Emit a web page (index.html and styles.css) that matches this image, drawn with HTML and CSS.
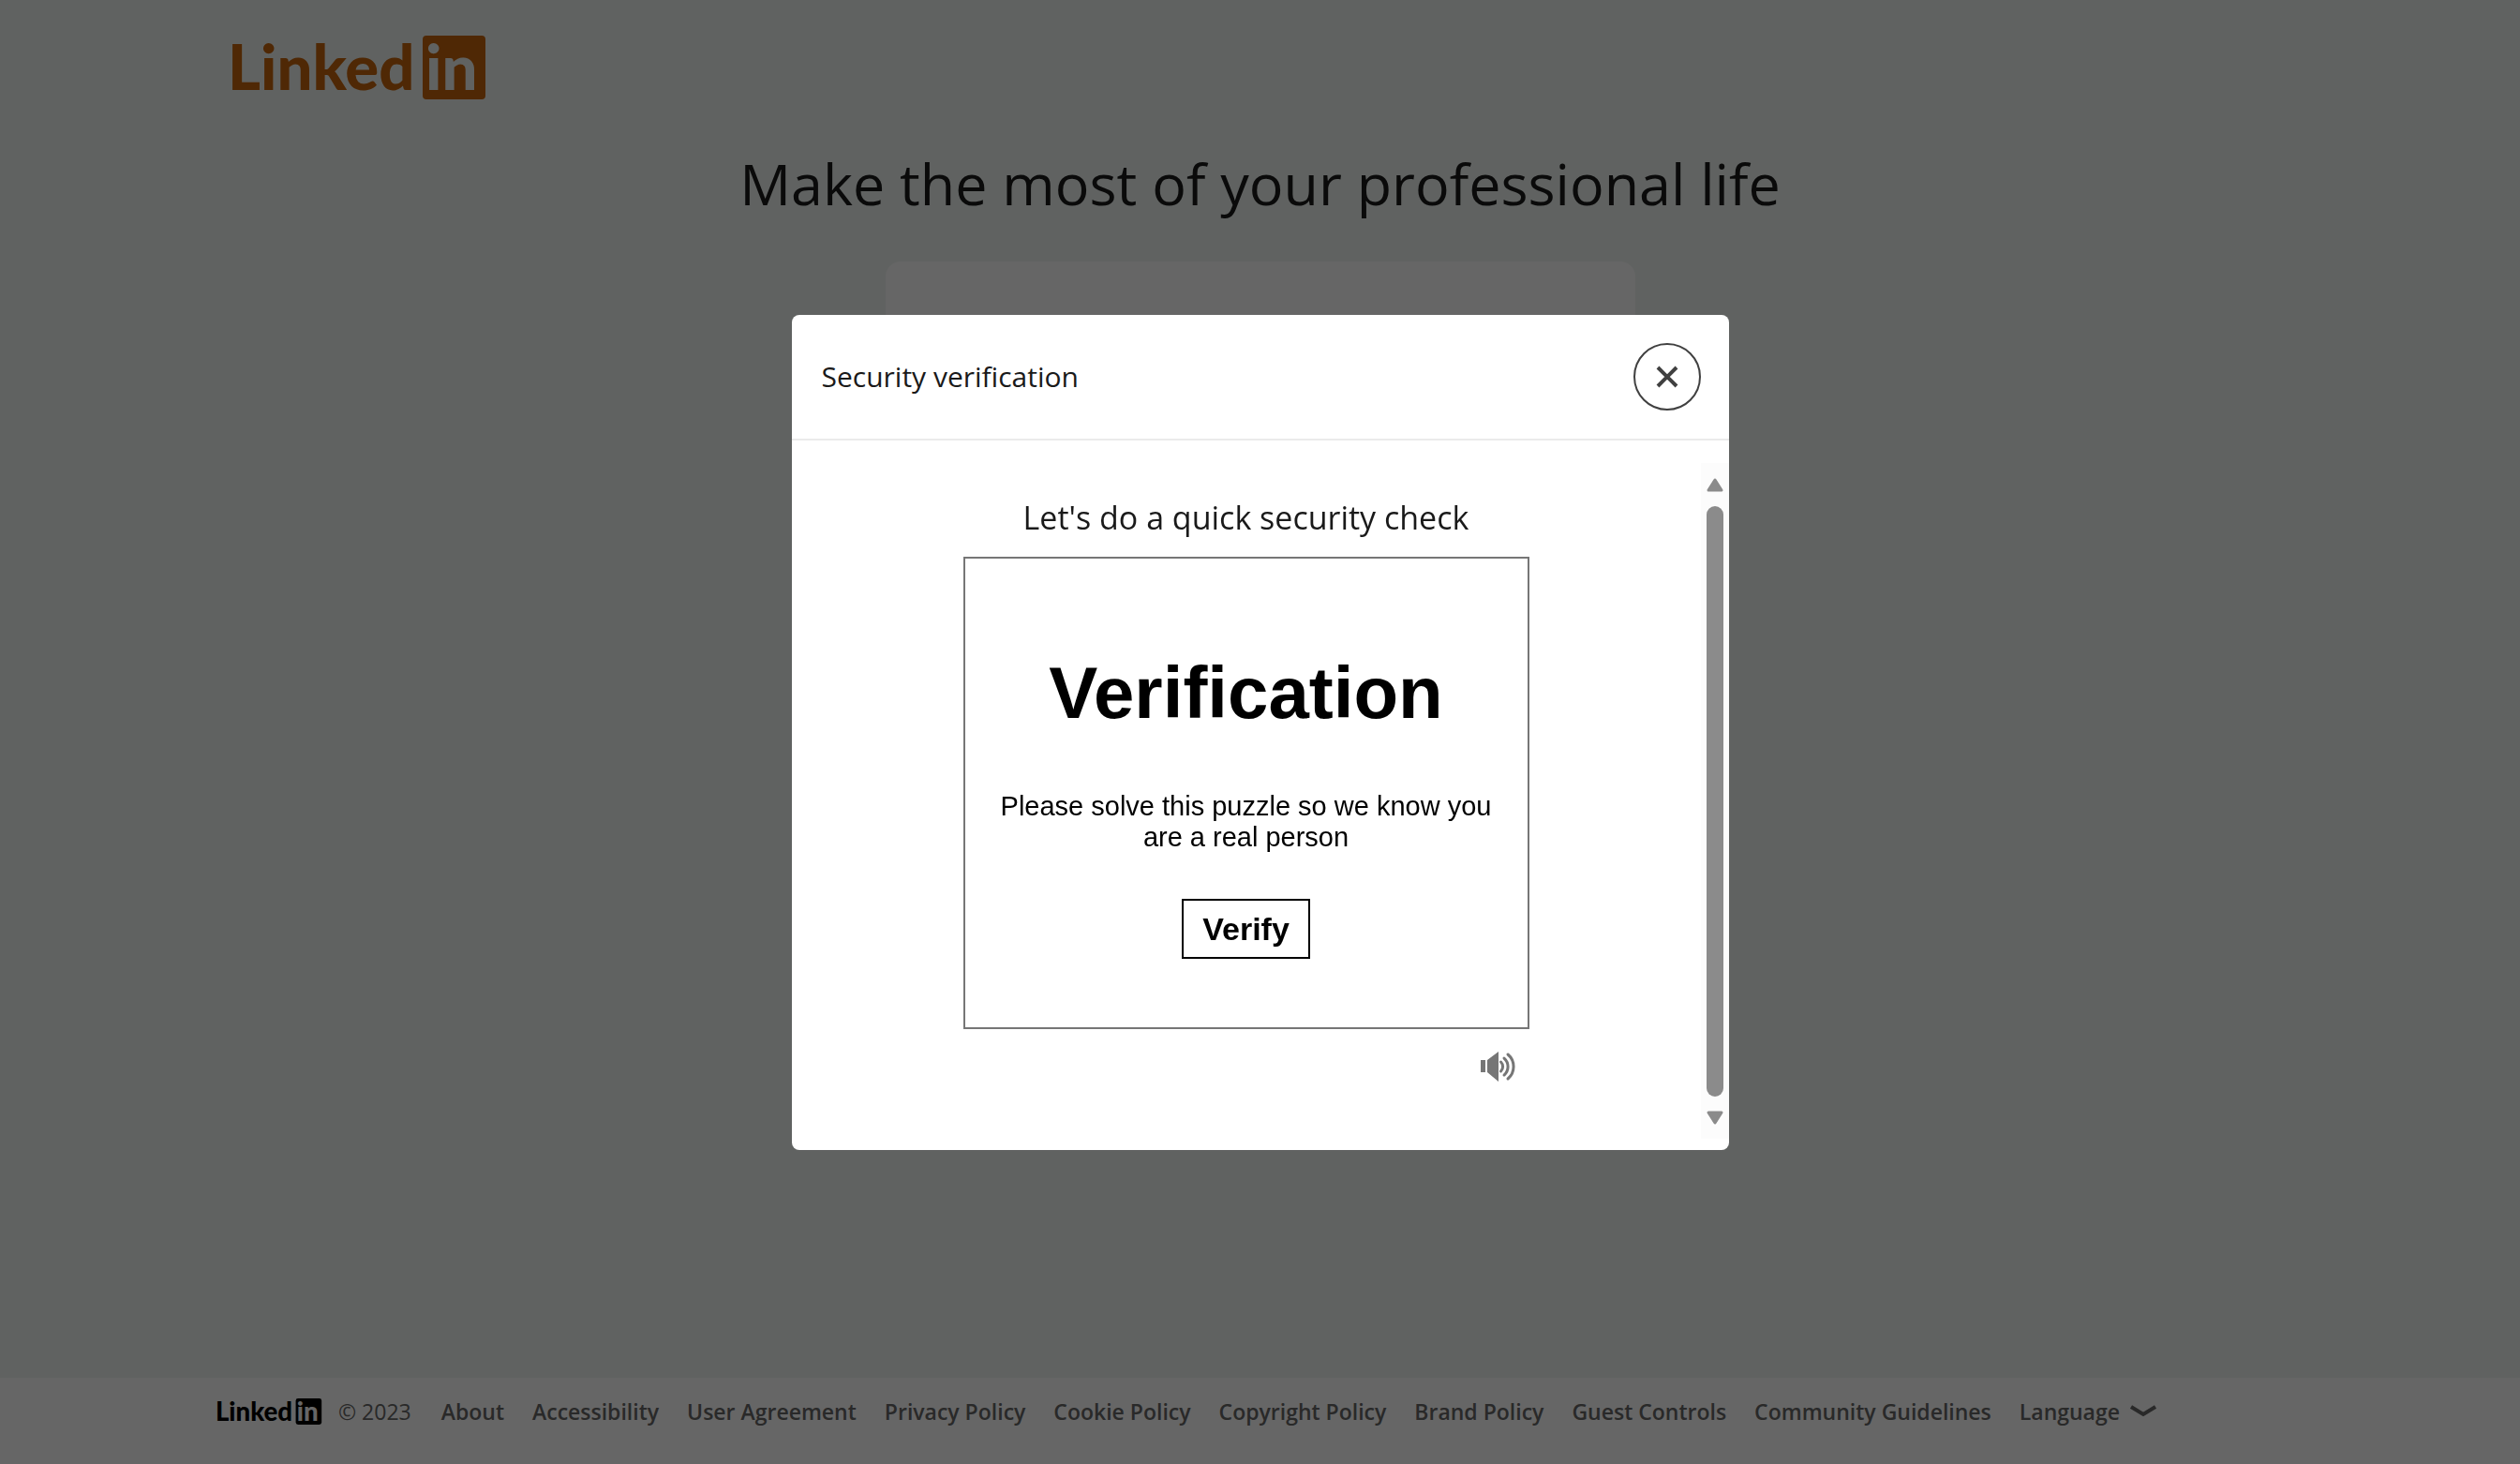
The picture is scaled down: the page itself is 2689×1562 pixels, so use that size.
FILE: index.html
```html
<!DOCTYPE html>
<html lang="en">
<head>
<meta charset="utf-8">
<title>Sign Up | LinkedIn</title>
<link rel="stylesheet" href="styles.css">
</head>
<body>
<div class="page">
  <header class="page-header">
    <a href="#" class="brand" aria-label="LinkedIn">
      <svg class="brand-logo" viewBox="0 0 272 68">
        <text x="-5" y="58" class="wordmark">Linked</text>
        <rect x="203" y="0" width="67" height="68" rx="4"/>
        <text x="206" y="58" class="wordmark wordmark-in">in</text>
      </svg>
    </a>
  </header>
  <main class="join">
    <h1 class="join-title">Make the most of your professional life</h1>
    <div class="join-card"></div>
  </main>
  <footer class="footer">
    <svg class="footer-logo" viewBox="0 0 272 68" role="img" aria-label="LinkedIn">
      <text x="-5" y="58" class="wordmark">Linked</text>
      <rect x="203" y="0" width="67" height="68" rx="6"/>
      <text x="206" y="58" class="wordmark wordmark-in">in</text>
    </svg>
    <span class="copyright">© 2023</span>
    <nav class="footer-links">
      <a href="#">About</a>
      <a href="#">Accessibility</a>
      <a href="#">User Agreement</a>
      <a href="#">Privacy Policy</a>
      <a href="#">Cookie Policy</a>
      <a href="#">Copyright Policy</a>
      <a href="#">Brand Policy</a>
      <a href="#">Guest Controls</a>
      <a href="#">Community Guidelines</a>
      <button type="button" class="language">Language
        <svg class="chevron" viewBox="0 0 28 14"><path d="M1 2L14 10L27 2" fill="none" stroke="currentColor" stroke-width="4"/></svg>
      </button>
    </nav>
  </footer>
</div>

<div class="overlay">
  <section class="modal" role="dialog" aria-labelledby="modal-title">
    <header class="modal-header">
      <h2 class="modal-title" id="modal-title">Security verification</h2>
      <button type="button" class="close" aria-label="Close">
        <svg viewBox="0 0 24 24"><path d="M2 2L22 22M22 2L2 22" stroke="currentColor" stroke-width="4"/></svg>
      </button>
    </header>
    <div class="modal-body">
      <div class="check">
        <h3 class="check-title">Let's do a quick security check</h3>
        <div class="puzzle">
          <h4 class="puzzle-title">Verification</h4>
          <p class="puzzle-text">Please solve this puzzle so we know you are a real person</p>
          <button type="button" class="verify">Verify</button>
        </div>
        <button type="button" class="audio" aria-label="Audio challenge">
          <svg viewBox="0 0 40 34">
            <path d="M1 10h5v13H1zM8 10L20 1v32L8 23z" fill="currentColor"/>
            <path d="M22.500 12a7 7 0 0 1 0 10M26 8a12 12 0 0 1 0 18M30 4a17 17 0 0 1 0 26" fill="none" stroke="currentColor" stroke-width="3" stroke-linecap="round"/>
          </svg>
        </button>
      </div>
      <div class="scrollbar" aria-hidden="true">
        <svg class="arrow" viewBox="0 0 18 15"><path d="M9 2L16 13H2z" fill="currentColor" stroke="currentColor" stroke-width="3" stroke-linejoin="round"/></svg>
        <div class="thumb"></div>
        <svg class="arrow" viewBox="0 0 18 15"><path d="M9 13L16 2H2z" fill="currentColor" stroke="currentColor" stroke-width="3" stroke-linejoin="round"/></svg>
      </div>
    </div>
  </section>
</div>
</body>
</html>
```
FILE: styles.css
```css
* { box-sizing: border-box; }

body {
  margin: 0;
  font-family: "Open Sans", "Noto Sans", sans-serif;
  color: #1a1a1a;
}

h1, h2, h3, h4, p { margin: 0; font-weight: 400; }

button {
  padding: 0;
  border: 0;
  background: none;
  font: inherit;
  color: inherit;
  cursor: pointer;
}

svg { display: block; overflow: visible; }

.page {
  display: flex;
  flex-direction: column;
  min-height: 100vh;
  background: #f0f6f3;
}

.page-header { display: flex; padding: 38px 248px 0; }

.brand { color: #c6640d; }
.brand-logo { width: 272px; height: 68px; fill: currentColor; }

.wordmark { font: 900 67px Lato, sans-serif; }
.wordmark-in { fill: #f0f6f3; }

.join {
  display: flex;
  flex: 1;
  flex-direction: column;
  align-items: center;
}

.join-title {
  padding: 46px 0 39px;
  font-size: 61px;
  line-height: 88px;
}

.join-card {
  width: 800px;
  height: 800px;
  border-radius: 16px;
  background: #fff;
}

.footer {
  display: flex;
  align-items: center;
  height: 92px;
  padding: 0 231px 20px;
  background: #fff;
  font-size: 23px;
  line-height: 32px;
}

.footer-logo { width: 114px; height: 28px; }
.footer .wordmark-in { fill: #fff; }

.copyright { margin: 0 32px 0 16px; color: #666; }

.footer-links {
  display: flex;
  gap: 30px;
  color: #666;
  font-weight: 600;
}

.footer-links a { color: inherit; text-decoration: none; }

.language { display: flex; align-items: center; gap: 11px; }
.chevron { width: 28px; height: 14px; }

.overlay {
  position: fixed;
  inset: 0;
  display: flex;
  align-items: center;
  justify-content: center;
  background: rgba(0, 0, 0, 0.6);
}

.modal {
  width: 1000px;
  border-radius: 8px;
  background: #fff;
}

.modal-header {
  display: flex;
  align-items: center;
  justify-content: space-between;
  padding: 30px 30px 30px 32px;
  border-bottom: 2px solid #ebebeb;
}

.modal-title { font-size: 30px; line-height: 40px; }

.close {
  display: grid;
  place-items: center;
  width: 72px;
  height: 72px;
  border: 2px solid #404040;
  border-radius: 50%;
  color: #404040;
}

.close svg { width: 24px; height: 24px; }

.modal-body { display: flex; padding: 24px 0 12px; }

.check {
  display: flex;
  flex: 1;
  flex-direction: column;
  align-items: center;
  padding-top: 34px;
}

.check-title {
  margin-bottom: 18px;
  font-size: 34px;
  line-height: 48px;
}

.puzzle {
  display: flex;
  flex-direction: column;
  align-items: center;
  width: 604px;
  padding: 98px 32px 73px;
  border: 2px solid #767676;
  color: #000;
  font-family: "Liberation Sans", Arial, sans-serif;
  text-align: center;
}

.puzzle-title { font-size: 78px; font-weight: 700; line-height: 90px; }

.puzzle-text {
  margin: 60px 0 49px;
  font-size: 29px;
  line-height: 33px;
}

.verify {
  padding: 8px 20px;
  border: 2px solid #000;
  font-size: 34px;
  font-weight: 700;
  line-height: 44px;
}

.audio {
  align-self: flex-end;
  margin: 23px 196px 0 0;
  color: #767676;
}

.audio svg { width: 40px; height: 34px; }

.scrollbar {
  display: flex;
  flex-direction: column;
  align-items: center;
  gap: 15px;
  width: 30px;
  padding: 16px 0 15px;
  background: #fcfcfc;
  color: #8b8b8b;
}

.arrow { width: 18px; height: 15px; }

.thumb {
  flex: 1;
  width: 18px;
  min-height: 630px;
  border-radius: 9px;
  background: #8b8b8b;
}
```
